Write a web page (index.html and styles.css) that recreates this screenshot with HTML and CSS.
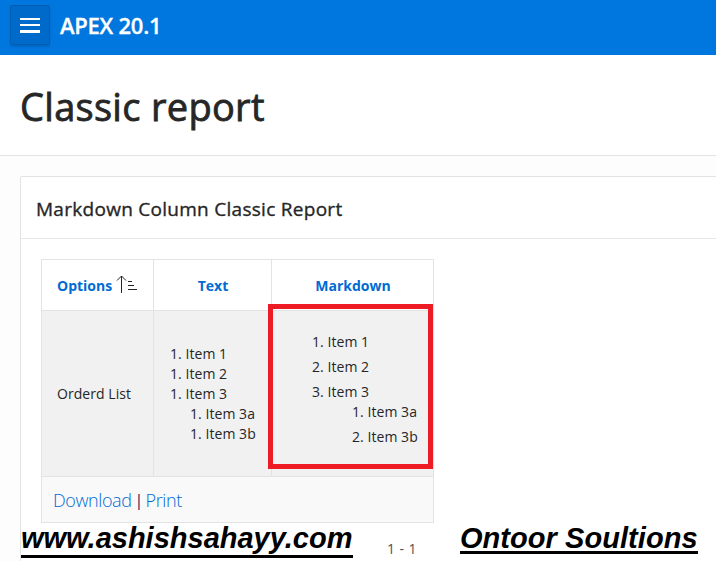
FILE: index.html
```html
<!DOCTYPE html>
<html lang="en">
<head>
<meta charset="utf-8">
<title>Classic report</title>
<link rel="stylesheet" href="styles.css">
</head>
<body>
<header class="topbar">
  <button class="menu" aria-label="Menu"><svg width="20" height="16" viewBox="0 0 20 16"><path d="M0 1h20v2H0zM0 7h20v2H0zM0 13h20v3H0z" fill="#fff"/></svg></button>
  <span class="brand">APEX 20.1</span>
</header>
<div class="title-bar"><h1>Classic report</h1></div>
<main class="region">
  <h2><span>Markdown Column Classic Report</span></h2>
  <div class="report">
    <div class="grid">
      <div class="cell head"><a>Options</a><svg class="sort" width="22" height="20" viewBox="0 0 22 20" fill="none" stroke="#262626"><path d="M5.5 1v17M1 5.5l4.5-4.5 4.5 4.5M12 6.5h4M12 10.5h6M12 14.5h9"/></svg></div>
      <div class="cell head center"><a>Text</a></div>
      <div class="cell head center"><a>Markdown</a></div>
      <div class="cell body">Orderd List</div>
      <div class="cell body"><div class="plain"><div>1. Item 1</div><div>1. Item 2</div><div>1. Item 3</div><div class="sub">1. Item 3a</div><div class="sub">1. Item 3b</div></div></div>
      <div class="cell body last">
        <div class="markdown"><div>1. Item 1</div><div>2. Item 2</div><div>3. Item 3</div><div class="sub first">1. Item 3a</div><div class="sub">2. Item 3b</div></div>
        <div class="highlight"></div>
      </div>
    </div>
    <div class="links"><a>Download</a><span class="bar">|</span><a>Print</a></div>
  </div>
  <footer class="notes">
    <span class="stamp site">www.ashishsahayy.com</span>
    <span class="pages">1 - 1</span>
    <span class="stamp company">Ontoor Soultions</span>
  </footer>
</main>
</body>
</html>
```

FILE: styles.css
```css
* { box-sizing: border-box; }
body { margin: 0; height: 561px; overflow: hidden; background: #fdfdfd; color: #262626; font-family: "Open Sans", "Noto Sans", sans-serif; font-size: 14px; }
.topbar { height: 55px; background: #0076df; display: flex; align-items: flex-start; padding: 5px 10px; gap: 10px; }
.menu { width: 40px; height: 40px; padding: 0; border: 1px solid #005eb2; border-radius: 2px; background: #006aca; box-shadow: 0 2px 2px rgba(0, 0, 0, .12); display: flex; align-items: center; justify-content: center; }
.brand { color: #fff; font-size: 22px; font-weight: 600; line-height: 40px; letter-spacing: -.25px; white-space: nowrap; -webkit-text-stroke: .3px #fff; }
.title-bar { height: 101px; background: #fff; border-bottom: 1px solid #e3e3e3; padding: 25px 20px 0; }
h1 { margin: 0; font-size: 38px; font-weight: 400; line-height: 52px; letter-spacing: .3px; white-space: nowrap; -webkit-text-stroke: .8px #262626; }
.region { margin: 20px 0 0 20px; height: 400px; width: 710px; background: #fff; border: 1px solid #e3e3e3; border-radius: 2px; }
h2 { margin: 0; height: 62px; padding: 0 15px; border-bottom: 1px solid #e8e8e8; font-size: 19px; font-weight: 400; line-height: 64px; letter-spacing: .28px; white-space: nowrap; -webkit-text-stroke: .35px #262626; }
.report { width: 393px; margin: 20px 0 0 20px; border: 1px solid #e3e3e3; }
.grid { display: grid; grid-template-columns: 112px 118px 161px; grid-template-rows: 51px 166px; }
.cell { display: flex; align-items: center; border-right: 1px solid #e3e3e3; border-bottom: 1px solid #e3e3e3; white-space: nowrap; }
.cell:nth-child(3n) { border-right: 0; }
.head { background: #fff; padding-left: 15px; font-weight: 700; }
.center { justify-content: center; padding: 0 0 0 1px; }
a { color: #006bd3; }
.sort { margin-left: 4px; }
.body { background: #f1f1f1; padding-left: 15px; letter-spacing: .05px; }
.plain { line-height: 20px; margin-left: 1px; }
.plain .sub { margin-left: 20px; }
.last { position: relative; padding-left: 40px; }
.markdown { line-height: 20px; padding-bottom: 4px; }
.markdown div { margin-bottom: 5px; }
.markdown .sub { margin-left: 40px; }
.markdown .first { margin-top: -5px; }
.highlight { position: absolute; left: -4px; top: -7px; width: 165px; height: 165px; border: 5px solid #ed1c24; }
.links { height: 45px; background: #f9f9f9; padding-left: 11px; font-size: 18px; font-weight: 300; line-height: 47px; letter-spacing: -.4px; display: flex; }
.bar { width: 14px; text-align: center; color: #202060; font-weight: 400; font-size: 16px; }
.notes { display: flex; align-items: flex-start; white-space: nowrap; }
.stamp { font: italic bold 29px/32px "Liberation Sans", Arial, sans-serif; color: #000; border-bottom: 3px solid #000; }
.site { width: 332px; height: 35px; line-height: 31px; }
.pages { width: 73px; margin-left: 34px; line-height: 20px; padding-top: 16px; color: #505050; letter-spacing: .4px; }
.company { height: 31px; width: 238px; line-height: 31px; letter-spacing: .05px; }
```
